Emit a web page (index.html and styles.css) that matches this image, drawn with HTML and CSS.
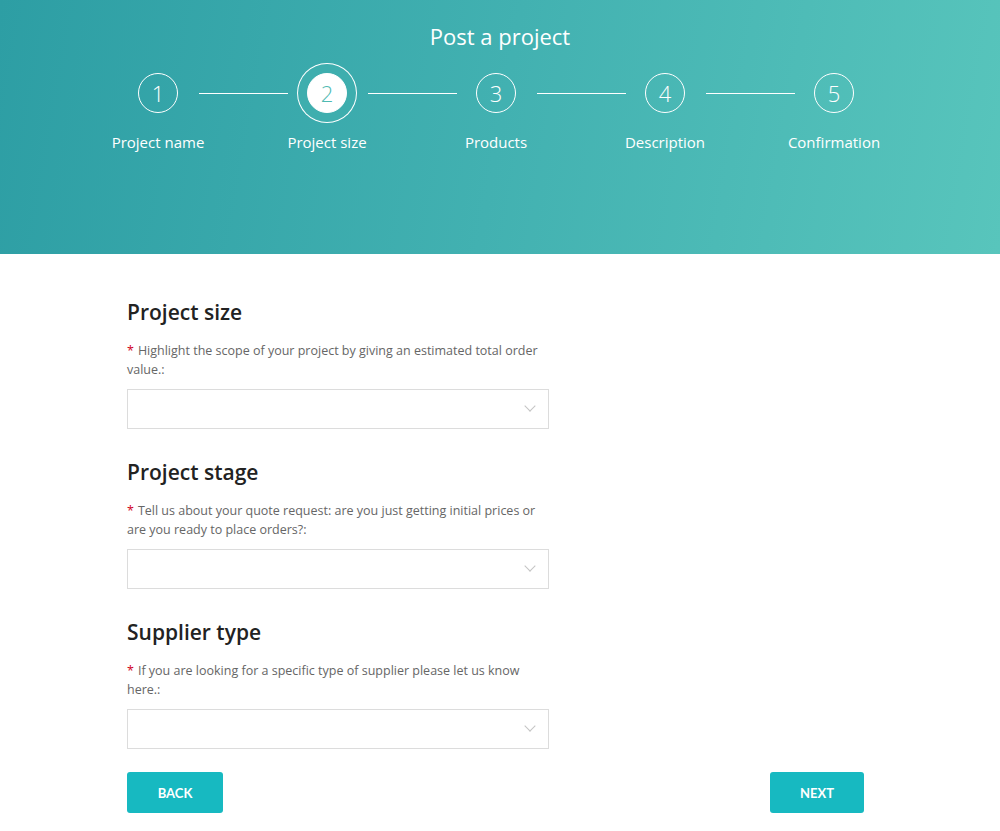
FILE: index.html
```html
<!DOCTYPE html>
<html lang="en">
<head>
  <meta charset="UTF-8" />
  <meta name="viewport" content="width=device-width, initial-scale=1.0"/>
  <title>Post a project</title>
  <link rel="stylesheet" href="styles.css">
</head>
<body>

  <header class="hero">
    <h1>Post a project</h1>
    <ol class="steps">
      <li class="step">
        <span class="circle">1</span>
        <span class="step-label">Project name</span>
      </li>
      <li class="step active">
        <span class="circle">2</span>
        <span class="step-label">Project size</span>
      </li>
      <li class="step">
        <span class="circle">3</span>
        <span class="step-label">Products</span>
      </li>
      <li class="step">
        <span class="circle">4</span>
        <span class="step-label">Description</span>
      </li>
      <li class="step last">
        <span class="circle">5</span>
        <span class="step-label">Confirmation</span>
      </li>
    </ol>
  </header>

  <main class="content">
    <section class="field">
      <h2>Project size</h2>
      <p class="label required">Highlight the scope of your project by giving an estimated total order value.:</p>
      <div class="select"><span class="chevron"></span></div>
    </section>

    <section class="field">
      <h2>Project stage</h2>
      <p class="label required">Tell us about your quote request: are you just getting initial prices or are you ready to place orders?:</p>
      <div class="select"><span class="chevron"></span></div>
    </section>

    <section class="field">
      <h2>Supplier type</h2>
      <p class="label required">If you are looking for a specific type of supplier please let us know here.:</p>
      <div class="select"><span class="chevron"></span></div>
    </section>

    <div class="actions">
      <button class="btn">BACK</button>
      <button class="btn next">NEXT</button>
    </div>
  </main>

</body>
</html>
```

FILE: styles.css
```css
body {
  margin: 0;
  font-family: "Open Sans", "Noto Sans", sans-serif;
  background: #fff;
}

.hero {
  height: 254px;
  box-sizing: border-box;
  padding-top: 21px;
  background: linear-gradient(100deg, #2d9ea4 0%, #42b1b1 50%, #58c5bc 100%);
  color: #fff;
  font-family: "Open Sans", sans-serif;
  text-align: center;
}

.hero h1 {
  margin: 0;
  font-size: 22px;
  font-weight: 500;
  line-height: 30px;
}

.steps {
  list-style: none;
  margin: 22px 0 0 -8px;
  padding: 0;
  display: flex;
  justify-content: center;
}

.step {
  width: 169px;
  display: flex;
  flex-direction: column;
  align-items: center;
  position: relative;
}

.step::after {
  content: "";
  position: absolute;
  top: 20px;
  left: 125px;
  width: 89px;
  height: 1px;
  background: #fff;
}

.step.last::after {
  display: none;
}

.circle {
  width: 38px;
  height: 38px;
  border: 1px solid #fff;
  border-radius: 50%;
  display: flex;
  align-items: center;
  justify-content: center;
  font-size: 22px;
  font-weight: 300;
}

.step.active .circle {
  background: #fff;
  color: #4fbab2;
  box-shadow: 0 0 0 9px #3eaeae, 0 0 0 10px #fff;
}

.step-label {
  margin-top: 19px;
  font-size: 15px;
  line-height: 20px;
}

.content {
  width: 737px;
  padding: 43px 0 0 127px;
}

.field h2 {
  margin: 0;
  font-size: 21px;
  font-weight: 600;
  color: #222;
  line-height: 30px;
}

.label {
  margin: 14px 0 0;
  width: 420px;
  font-size: 12.5px;
  line-height: 19px;
  color: #666;
}

.required::before {
  content: "*";
  color: #d0021b;
  margin-right: 4px;
}

.select {
  margin: 10px 0 28px;
  width: 420px;
  height: 38px;
  border: 1px solid #dcdcdc;
  position: relative;
}

.chevron {
  position: absolute;
  right: 14px;
  top: 12px;
  width: 7px;
  height: 7px;
  border-right: 1px solid #c4c4c4;
  border-bottom: 1px solid #c4c4c4;
  transform: rotate(45deg);
}

.actions {
  display: flex;
  justify-content: space-between;
  margin-top: -5px;
}

.btn {
  width: 96px;
  height: 41px;
  border: none;
  border-radius: 3px;
  background: #17b9c1;
  color: #fff;
  font-family: "Lato", sans-serif;
  font-weight: 700;
  font-size: 13px;
  cursor: pointer;
}

.btn.next {
  width: 94px;
}
```
